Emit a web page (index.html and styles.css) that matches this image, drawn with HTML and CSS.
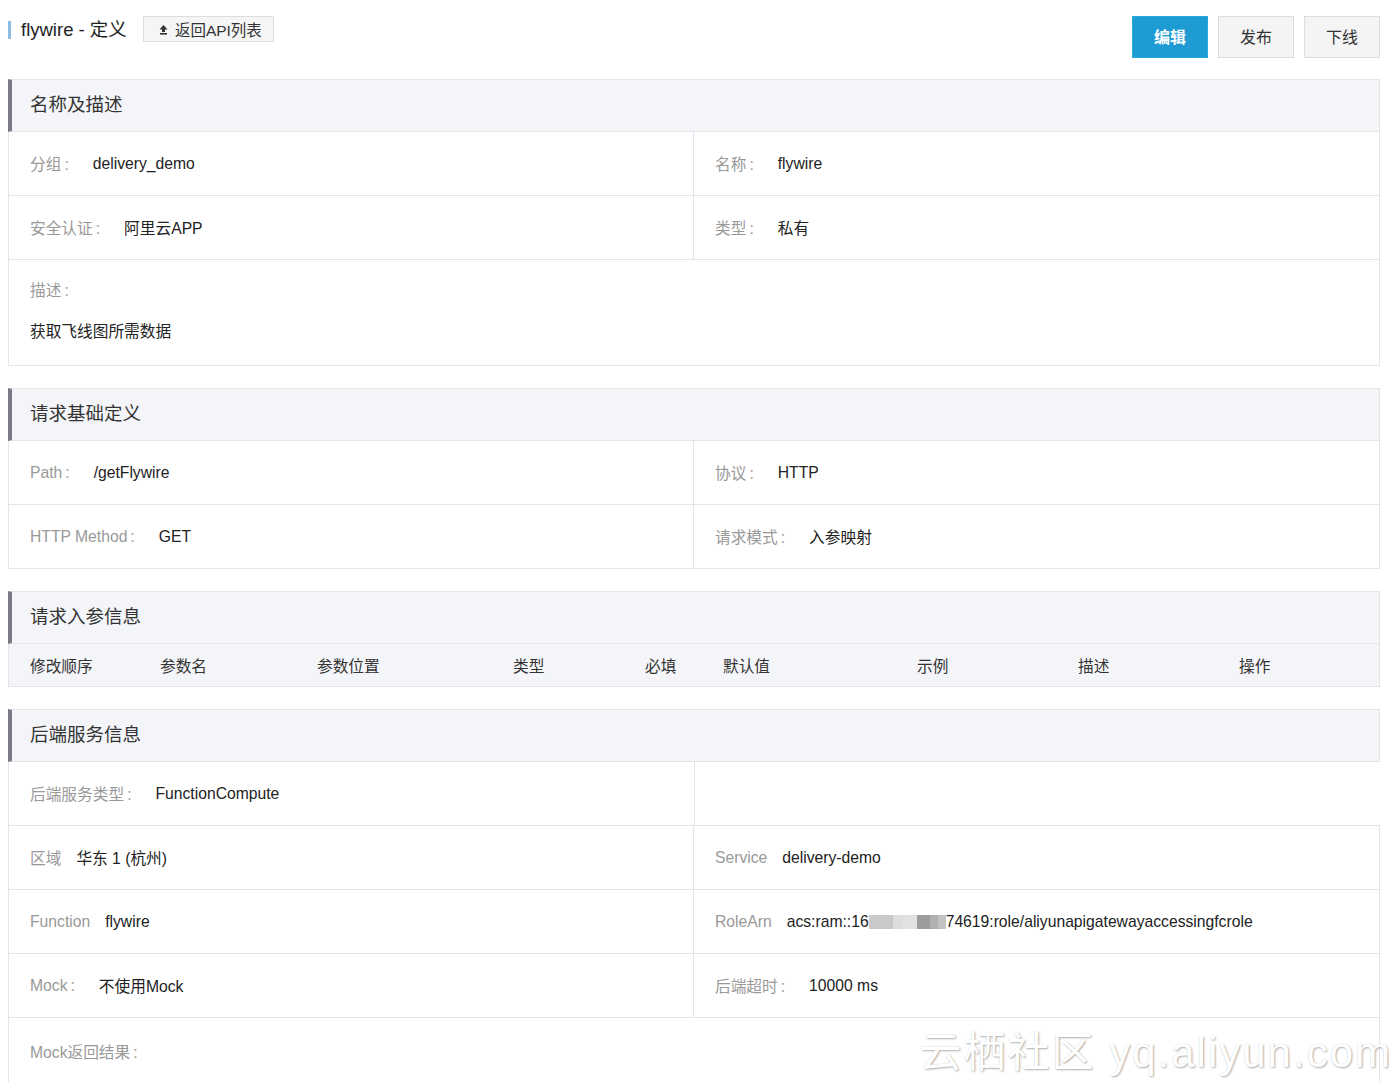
FILE: index.html
```html
<!DOCTYPE html>
<html lang="zh-CN">
<head>
<meta charset="utf-8">
<title>flywire - 定义</title>
<link rel="stylesheet" href="styles.css">
</head>
<body>
<div class="page">
  <header class="topbar">
    <div class="title-wrap">
      <h1 class="title">flywire - 定义</h1>
      <button class="back">
        <svg class="up" width="9" height="11" viewBox="0 0 9 11"><path d="M4.5 1 L8.5 5.5 L6 5.5 L6 8 L3 8 L3 5.5 L0.5 5.5 Z" fill="#333"/><rect x="1" y="9" width="7" height="1.6" fill="#333"/></svg>
        返回API列表
      </button>
    </div>
    <div class="actions">
      <button class="btn primary">编辑</button>
      <button class="btn">发布</button>
      <button class="btn">下线</button>
    </div>
  </header>

  <section class="panel">
    <div class="panel-head">名称及描述</div>
    <div class="row">
      <div class="cell"><span class="lbl">分组<span class="colon">:</span></span><span class="val">delivery_demo</span></div>
      <div class="cell"><span class="lbl">名称<span class="colon">:</span></span><span class="val">flywire</span></div>
    </div>
    <div class="row">
      <div class="cell"><span class="lbl">安全认证<span class="colon">:</span></span><span class="val">阿里云APP</span></div>
      <div class="cell"><span class="lbl">类型<span class="colon">:</span></span><span class="val">私有</span></div>
    </div>
    <div class="row block">
      <span class="lbl">描述<span class="colon">:</span></span>
      <span class="val desc">获取飞线图所需数据</span>
    </div>
  </section>

  <section class="panel">
    <div class="panel-head">请求基础定义</div>
    <div class="row">
      <div class="cell"><span class="lbl">Path<span class="colon">:</span></span><span class="val">/getFlywire</span></div>
      <div class="cell"><span class="lbl">协议<span class="colon">:</span></span><span class="val">HTTP</span></div>
    </div>
    <div class="row">
      <div class="cell"><span class="lbl">HTTP Method<span class="colon">:</span></span><span class="val">GET</span></div>
      <div class="cell"><span class="lbl">请求模式<span class="colon">:</span></span><span class="val">入参映射</span></div>
    </div>
  </section>

  <section class="panel">
    <div class="panel-head">请求入参信息</div>
    <div class="thead">
      <span>修改顺序</span><span>参数名</span><span>参数位置</span><span>类型</span><span>必填</span><span>默认值</span><span>示例</span><span>描述</span><span>操作</span>
    </div>
  </section>

  <section class="panel">
    <div class="panel-head">后端服务信息</div>
    <div class="row half">
      <div class="cell"><span class="lbl">后端服务类型<span class="colon">:</span></span><span class="val">FunctionCompute</span></div>
      <div class="cell empty"></div>
    </div>
    <div class="row">
      <div class="cell"><span class="lbl nc">区域</span><span class="val">华东 1 (杭州)</span></div>
      <div class="cell"><span class="lbl nc">Service</span><span class="val">delivery-demo</span></div>
    </div>
    <div class="row">
      <div class="cell"><span class="lbl nc">Function</span><span class="val">flywire</span></div>
      <div class="cell"><span class="lbl nc">RoleArn</span><span class="val">acs:ram::16<span class="blur"><i class="b1"></i><i class="b2"></i><i class="b3"></i><i class="b4"></i><i class="b5"></i><i class="b6"></i></span>74619:role/aliyunapigatewayaccessingfcrole</span></div>
    </div>
    <div class="row">
      <div class="cell"><span class="lbl">Mock<span class="colon">:</span></span><span class="val">不使用Mock</span></div>
      <div class="cell"><span class="lbl">后端超时<span class="colon">:</span></span><span class="val">10000 ms</span></div>
    </div>
    <div class="row block tall">
      <span class="lbl">Mock返回结果<span class="colon">:</span></span>
    </div>
  </section>
</div>
<div class="watermark">云栖社区 yq.aliyun.com</div>
</body>
</html>
```

FILE: styles.css
```css
* { box-sizing: border-box; }
html, body { margin: 0; padding: 0; }
body {
  position: relative;
  background: #fff;
  font-family: "Liberation Sans", "Noto Sans CJK SC", sans-serif;
  color: #333;
  font-size: 15.7px;
  overflow: hidden;
  height: 1082px;
}
.page { padding: 0 20px 0 8px; }

.topbar {
  display: flex;
  justify-content: space-between;
  align-items: flex-start;
  margin-top: 16px;
  height: 41px;
  margin-bottom: 22px;
}
.title-wrap { display: flex; align-items: center; height: 26px; }
.title {
  margin: 0;
  font-size: 18.5px;
  font-weight: normal;
  color: #222;
  border-left: 3px solid #8fbde3;
  padding-left: 10px;
  line-height: 18px;
  margin-top: 2px;
}
.back {
  margin-left: 16px;
  height: 26px;
  padding: 0 11px 0 15px;
  font-family: inherit;
  font-size: 15.5px;
  color: #333;
  background: #f5f5f5;
  border: 1px solid #ddd;
  border-radius: 0;
  display: flex;
  align-items: center;
  gap: 7px;
}
.up { display: block; }
.actions { display: flex; gap: 10px; }
.btn {
  width: 76px;
  height: 42px;
  font-family: inherit;
  font-size: 16px;
  color: #333;
  background: #f4f4f4;
  border: 1px solid #ddd;
  border-radius: 0;
  padding-bottom: 3px;
}
.btn.primary {
  background: #1e9bd3;
  border-color: #2aa7dc;
  color: #fff;
  font-weight: bold;
}

.panel { margin-bottom: 22px; }
.panel-head {
  height: 53px;
  background: #f4f5f8;
  border-top: 1px solid #e3e5e8;
  border-right: 1px solid #e3e5e8;
  border-bottom: 1px solid #e3e5e8;
  border-left: 4px solid #7b7b88;
  padding-left: 18px;
  padding-bottom: 5px;
  display: flex;
  align-items: center;
  font-size: 18.5px;
  color: #333;
}
.row {
  display: grid;
  grid-template-columns: 1fr 1fr;
  height: 64px;
  border-left: 1px solid #e3e5e8;
  border-right: 1px solid #e3e5e8;
  border-bottom: 1px solid #e3e5e8;
}
.cell {
  display: flex;
  align-items: center;
  padding-left: 21px;
  white-space: nowrap;
}
.cell:first-child { border-right: 1px solid #e3e5e8; }
.row.half { border-right: none; }
.lbl { color: #999; margin-right: 24px; }
.lbl.nc { margin-right: 15px; }
.colon { margin-left: 3px; }
.val { color: #222; }
.row.block {
  display: flex;
  flex-direction: column;
  align-items: flex-start;
  height: 106px;
  padding: 21px 21px;
  gap: 20px;
}
.row.block .lbl { line-height: 20px; }
.desc { line-height: 22px; }
.row.tall { height: 120px; padding-top: 25px; }

.thead {
  display: grid;
  grid-template-columns: 130px 157px 196px 132px 78px 194px 161px 161px 1fr;
  height: 43px;
  align-items: center;
  background: #f4f5f8;
  border-left: 1px solid #e3e5e8;
  border-right: 1px solid #e3e5e8;
  border-bottom: 1px solid #e3e5e8;
  color: #333;
}
.thead span { padding-left: 21px; }

.blur { display: inline-flex; vertical-align: -2px; height: 14px; }
.blur i { display: block; height: 14px; }
.b1 { width: 24px; background: #c9c9c9; }
.b2 { width: 10px; background: #dedede; }
.b3 { width: 14px; background: #e2e2e2; }
.b4 { width: 13px; background: #9c9c9c; }
.b5 { width: 8px; background: #b0b0b0; }
.b6 { width: 8px; background: #c2c2c2; }

.watermark {
  position: absolute;
  right: 8px;
  top: 1018px;
  font-size: 42px;
  color: #fff;
  letter-spacing: 2px;
  text-shadow: 1px 1px 2px rgba(0,0,0,0.3), 0 0 1px rgba(0,0,0,0.15);
  white-space: nowrap;
}
```
